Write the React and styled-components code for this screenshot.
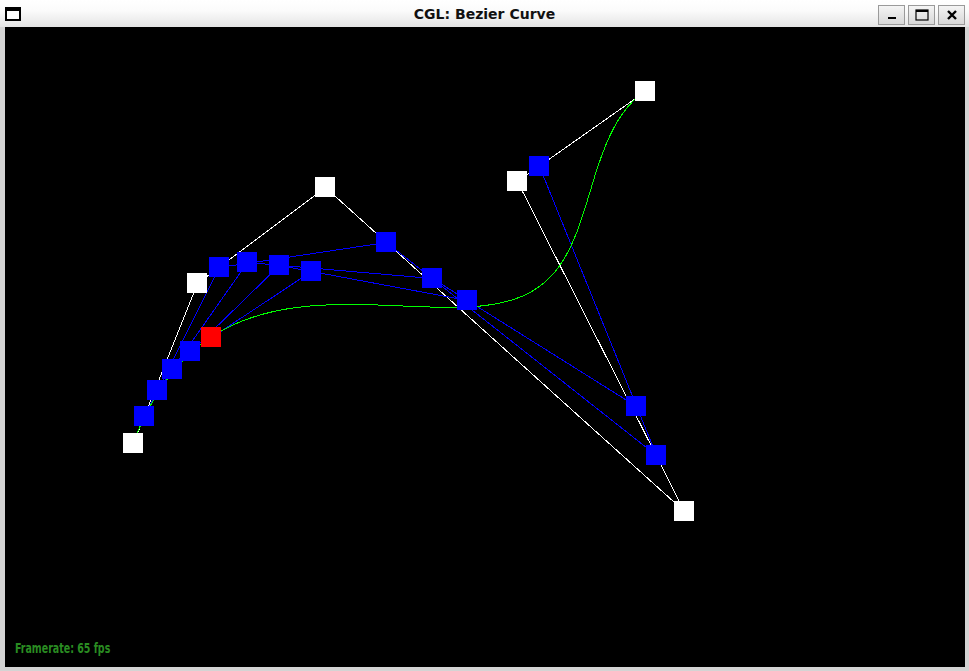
import React from 'react';
import styled, { createGlobalStyle } from 'styled-components';

const GlobalStyle = createGlobalStyle`
  html, body {
    margin: 0;
    padding: 0;
    background: #d4d4d4;
    overflow: hidden;
  }
`;

// control points, canvas coordinates
const CONTROL = [
  [128, 416],
  [192, 256],
  [320, 160],
  [679, 484],
  [512, 154],
  [640, 64],
];
const T = 0.17;

const lerp = (a, b, t) => [a[0] + (b[0] - a[0]) * t, a[1] + (b[1] - a[1]) * t];

// de Casteljau levels for the construction
function casteljauLevels(points, t) {
  const levels = [points];
  let cur = points;
  while (cur.length > 1) {
    const next = [];
    for (let i = 0; i < cur.length - 1; i++) next.push(lerp(cur[i], cur[i + 1], t));
    levels.push(next);
    cur = next;
  }
  return levels;
}

function curvePoints(points, steps) {
  const out = [];
  for (let i = 0; i <= steps; i++) {
    const lv = casteljauLevels(points, i / steps);
    out.push(lv[lv.length - 1][0]);
  }
  return out;
}

const Window = styled.div`
  width: 969px;
  height: 671px;
  background: #d4d4d4;
  display: flex;
  flex-direction: column;
`;

const TitleBar = styled.div`
  height: 27px;
  display: flex;
  align-items: center;
  padding: 0 4px 0 5px;
  background: linear-gradient(#ffffff 0%, #fbfbfb 40%, #e4e4e4 100%);
  box-sizing: border-box;
`;

const AppIcon = styled.div`
  width: 16px;
  height: 14px;
  box-sizing: border-box;
  border: 2px solid #000;
  border-top-width: 4px;
  background: #fff;
  margin-top: 1px;
`;

const Title = styled.div`
  flex: 1;
  text-align: center;
  font-family: 'DejaVu Sans', sans-serif;
  font-weight: bold;
  font-size: 14px;
  color: #111;
  padding-left: 70px;
`;

const Buttons = styled.div`
  display: flex;
  gap: 3px;
  align-self: flex-start;
  margin-top: 5px;
`;

const WinButton = styled.div`
  width: 27px;
  height: 20px;
  box-sizing: border-box;
  border: 1px solid #9a9a9a;
  background: linear-gradient(#f4f4f4, #d8d8d8);
  display: flex;
  align-items: center;
  justify-content: center;
`;

const Body = styled.div`
  flex: 1;
  display: flex;
  padding: 0 4px 4px 5px;
`;

const Canvas = styled.div`
  position: relative;
  width: 960px;
  height: 640px;
  background: #000;
`;

const Framerate = styled.div`
  position: absolute;
  left: 10px;
  bottom: 11px;
  font-family: 'DejaVu Sans Condensed', 'DejaVu Sans', sans-serif;
  font-stretch: condensed;
  font-weight: bold;
  font-size: 13.5px;
  color: #2a8c22;
  transform: scaleX(0.78);
  transform-origin: left center;
  white-space: nowrap;
`;

const Scene = styled.svg`
  display: block;
`;

const LEVEL_COLORS = ['#ffffff', '#0000ff', '#0000ff', '#0000ff', '#0000ff', '#ff0000'];

export default function App() {
  const levels = casteljauLevels(CONTROL, T);
  const curve = curvePoints(CONTROL, 300);
  const px = (v) => Math.round(v) + 0.5;

  return (
    <>
      <GlobalStyle />
      <Window>
        <TitleBar>
          <AppIcon />
          <Title>CGL: Bezier Curve</Title>
          <Buttons>
            <WinButton>
              <svg width="12" height="10" viewBox="0 0 12 10">
                <rect x="2" y="7" width="8" height="2" fill="#000" />
              </svg>
            </WinButton>
            <WinButton>
              <svg width="14" height="12" viewBox="0 0 14 12">
                <rect x="1" y="1" width="12" height="10" fill="none" stroke="#000" strokeWidth="1.2" />
                <rect x="1" y="1" width="12" height="2" fill="#000" />
              </svg>
            </WinButton>
            <WinButton>
              <svg width="12" height="12" viewBox="0 0 12 12">
                <path d="M2 2 L10 10 M10 2 L2 10" stroke="#000" strokeWidth="2.4" />
              </svg>
            </WinButton>
          </Buttons>
        </TitleBar>
        <Body>
          <Canvas>
            <Scene width="960" height="640" shapeRendering="crispEdges">
              {levels.slice(0, -1).map((lv, li) =>
                lv.slice(0, -1).map((p, i) => (
                  <line
                    key={`l${li}-${i}`}
                    x1={px(p[0])}
                    y1={px(p[1])}
                    x2={px(lv[i + 1][0])}
                    y2={px(lv[i + 1][1])}
                    stroke={li === 0 ? '#ffffff' : '#0000ff'}
                    strokeWidth="1"
                  />
                ))
              )}
              <polyline
                points={curve.map((p) => `${p[0].toFixed(1)},${p[1].toFixed(1)}`).join(' ')}
                fill="none"
                stroke="#00ff00"
                strokeWidth="1"
              />
              {levels.map((lv, li) =>
                lv.map((p, i) => (
                  <rect
                    key={`r${li}-${i}`}
                    x={Math.round(p[0]) - 10}
                    y={Math.round(p[1]) - 10}
                    width="20"
                    height="20"
                    fill={LEVEL_COLORS[li]}
                  />
                ))
              )}
            </Scene>
            <Framerate>Framerate: 65 fps</Framerate>
          </Canvas>
        </Body>
      </Window>
    </>
  );
}
